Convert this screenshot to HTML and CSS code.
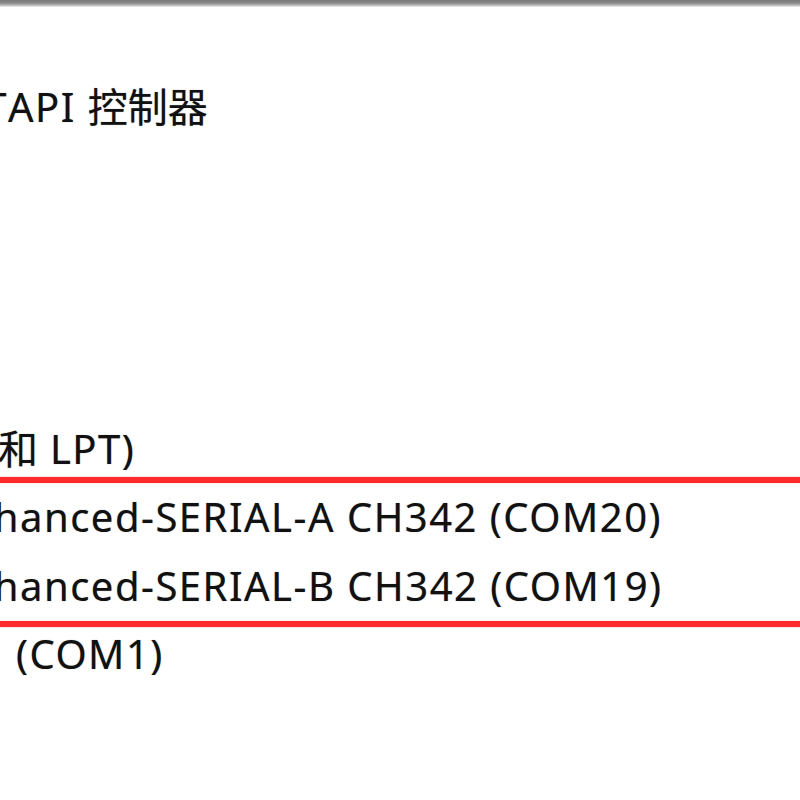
FILE: index.html
```html
<!DOCTYPE html>
<html lang="zh-CN">
<head>
<meta charset="utf-8">
<title>设备管理器</title>
<link rel="stylesheet" href="styles.css">
</head>
<body>
<div class="topbar"></div>
<div class="tree">
  <div class="row"><span class="lead lead-api"><span>IDE ATA/AT</span></span><span class="rest">API <span class="cjk">控制器</span></span></div>
  <div class="row"></div>
  <div class="row"></div>
  <div class="row"></div>
  <div class="row"></div>
  <div class="row"><span class="lead lead-lpt"><span>端口 (COM <span class="cjk">和</span></span></span><span class="rest">&nbsp;LPT)</span></div>
  <div class="row"><span class="lead lead-usb"><span>USB-Enh</span></span><span class="rest">anced-SERIAL-A CH342 (COM20)</span></div>
  <div class="row"><span class="lead lead-usb"><span>USB-Enh</span></span><span class="rest">anced-SERIAL-B CH342 (COM19)</span></div>
  <div class="row"><span class="lead lead-com"><span>通信端口</span></span><span class="rest">&nbsp;(COM1)</span></div>
  <div class="row"></div>
</div>
<div class="mark"></div>
</body>
</html>
```

FILE: styles.css
```css
html, body {
  margin: 0;
  padding: 0;
  width: 800px;
  height: 800px;
  overflow: hidden;
  background: #fff;
}
body {
  position: relative;
  font-family: "Noto Sans", "Noto Sans CJK SC", sans-serif;
  color: #111;
}
.topbar {
  height: 7px;
  background: linear-gradient(#7a7a7a, #8c8c8c 45%, #b9b9b9 75%, #f4f4f4);
}
.tree {
  padding-top: 66px;
  display: flex;
  flex-direction: column;
}
.row {
  height: 68.4px;
  line-height: 68.4px;
  font-size: 40px;
  letter-spacing: 1.5px;
  display: flex;
  white-space: pre;
  text-shadow: 0 0 1px rgba(0, 0, 0, 0.45);
}
.cjk {
  letter-spacing: 0;
}
.lead {
  display: flex;
  justify-content: flex-end;
  flex: none;
}
.lead-api { width: 8px; }
.lead-lpt { width: 38px; }
.lead-usb { width: 20px; }
.lead-com { width: 4px; }
.mark {
  position: absolute;
  left: -20px;
  right: -20px;
  top: 477px;
  height: 138px;
  border-top: 6px solid #ff2a2a;
  border-bottom: 6px solid #ff2a2a;
  box-shadow: 0 0 1px rgba(255, 42, 42, 0.6), inset 0 0 1px rgba(255, 42, 42, 0.6);
}
```
